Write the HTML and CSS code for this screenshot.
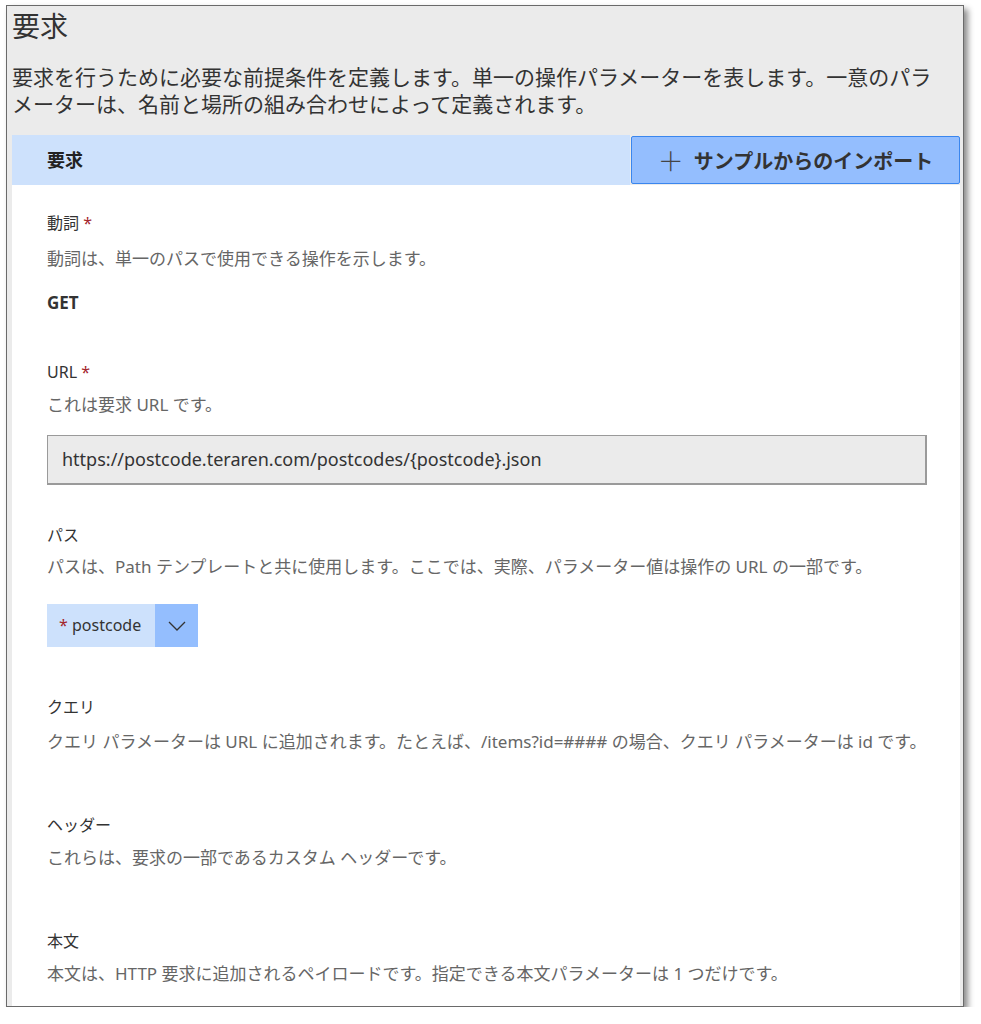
FILE: index.html
```html
<!DOCTYPE html>
<html lang="ja">
<head>
<meta charset="utf-8">
<link rel="stylesheet" href="styles.css">
</head>
<body>
<div class="frame">
  <div class="head">
    <h1 class="title">要求</h1>
    <p class="intro">要求を行うために必要な前提条件を定義します。単一の操作パラメーターを表します。一意のパラメーターは、名前と場所の組み合わせによって定義されます。</p>
  </div>
  <div class="bar">
    <div class="bar-label">要求</div>
    <button class="import"><span class="plus">＋</span>サンプルからのインポート</button>
  </div>
  <div class="content">
    <div class="label">動詞 <span class="req">*</span></div>
    <div class="desc first-desc">動詞は、単一のパスで使用できる操作を示します。</div>
    <div class="verb">GET</div>

    <div class="label sec-url">URL <span class="req">*</span></div>
    <div class="desc">これは要求 URL です。</div>
    <div class="urlbox">https://postcode.teraren.com/postcodes/{postcode}.json</div>

    <div class="label sec-path">パス</div>
    <div class="desc">パスは、Path テンプレートと共に使用します。ここでは、実際、パラメーター値は操作の URL の一部です。</div>
    <div class="chip">
      <div class="chip-name"><span class="req">*</span> postcode</div>
      <div class="chip-toggle">
        <svg width="18" height="10" viewBox="0 0 18 10"><path d="M1 1 L9 9 L17 1" fill="none" stroke="#333" stroke-width="1.3"/></svg>
      </div>
    </div>

    <div class="label sec-query">クエリ</div>
    <div class="desc">クエリ パラメーターは URL に追加されます。たとえば、/items?id=#### の場合、クエリ パラメーターは id です。</div>

    <div class="label sec-more">ヘッダー</div>
    <div class="desc">これらは、要求の一部であるカスタム ヘッダーです。</div>

    <div class="label sec-more">本文</div>
    <div class="desc">本文は、HTTP 要求に追加されるペイロードです。指定できる本文パラメーターは 1 つだけです。</div>
  </div>
</div>
</body>
</html>
```
FILE: styles.css
```css
html, body {
  margin: 0;
  padding: 0;
  background: #ffffff;
}
body {
  font-family: "Noto Sans", "Noto Sans CJK JP", sans-serif;
  color: #333;
}
.frame {
  margin: 5px 0 0 6px;
  width: 958px;
  height: 1002px;
  border: 1px solid #6a6a6a;
  background: #ebebeb;
  box-shadow: 4px 4px 6px rgba(0,0,0,0.45);
  padding: 0 3px 0 5px;
  box-sizing: border-box;
  overflow: hidden;
  display: flex;
  flex-direction: column;
}
.head {
  padding-top: 1px;
}
.title {
  margin: 0;
  font-size: 28px;
  line-height: 38px;
  font-weight: 400;
  color: #333;
}
.intro {
  margin: 19px 0 0 0;
  width: 935px;
  font-size: 21px;
  line-height: 27px;
  color: #333;
}
.bar {
  margin-top: 17px;
  display: flex;
  align-items: center;
  height: 50px;
}
.bar-label {
  flex: 1;
  height: 50px;
  background: #cde1fc;
  font-size: 18px;
  font-weight: 700;
  line-height: 50px;
  padding-left: 35px;
  color: #222;
}
.import {
  width: 329px;
  height: 48px;
  margin-left: 1px;
  background: #94befe;
  border: 1px solid #3a86ee;
  border-radius: 2px;
  font-family: inherit;
  font-size: 20px;
  font-weight: 700;
  color: #333;
  display: flex;
  align-items: center;
  justify-content: center;
  padding: 0;
}
.plus {
  font-weight: 300;
  font-size: 26px;
  margin-right: 10px;
  color: #444;
}
.content {
  flex: 1;
  background: #fff;
  padding: 26px 0 0 35px;
}
.label {
  font-size: 16px;
  line-height: 24px;
  color: #333;
}
.req {
  color: #a4262c;
}
.desc {
  margin-top: 11px;
  font-size: 17px;
  line-height: 24px;
  color: #666;
}
.desc.first-desc { margin-top: 12px; }
.verb {
  margin-top: 19px;
  font-size: 17px;
  font-weight: 700;
  line-height: 26px;
  color: #333;
}
.sec-url { margin-top: 44px; }
.sec-url + .desc { margin-top: 9px; }
.urlbox {
  margin-top: 18px;
  width: 880px;
  height: 50px;
  box-sizing: border-box;
  border: 2px solid #9a9a9a;
  border-width: 1px 2px 2px 1px;
  background: #ebebeb;
  font-size: 18px;
  line-height: 47px;
  padding-left: 14px;
  color: #333;
}
.sec-path { margin-top: 38px; }
.sec-path + .desc { margin-top: 8px; }
.chip {
  margin-top: 25px;
  display: flex;
  width: 151px;
  height: 43px;
}
.chip-name {
  width: 108px;
  background: #cde1fc;
  font-size: 16px;
  line-height: 43px;
  padding-left: 12px;
  box-sizing: border-box;
  color: #333;
}
.chip-toggle {
  flex: 1;
  background: #94befe;
  display: flex;
  align-items: center;
  justify-content: center;
}
.sec-query { margin-top: 48px; }
.sec-query + .desc { margin-top: 11px; }
.sec-more { margin-top: 59px; }
.sec-more + .desc { margin-top: 9px; }
```
